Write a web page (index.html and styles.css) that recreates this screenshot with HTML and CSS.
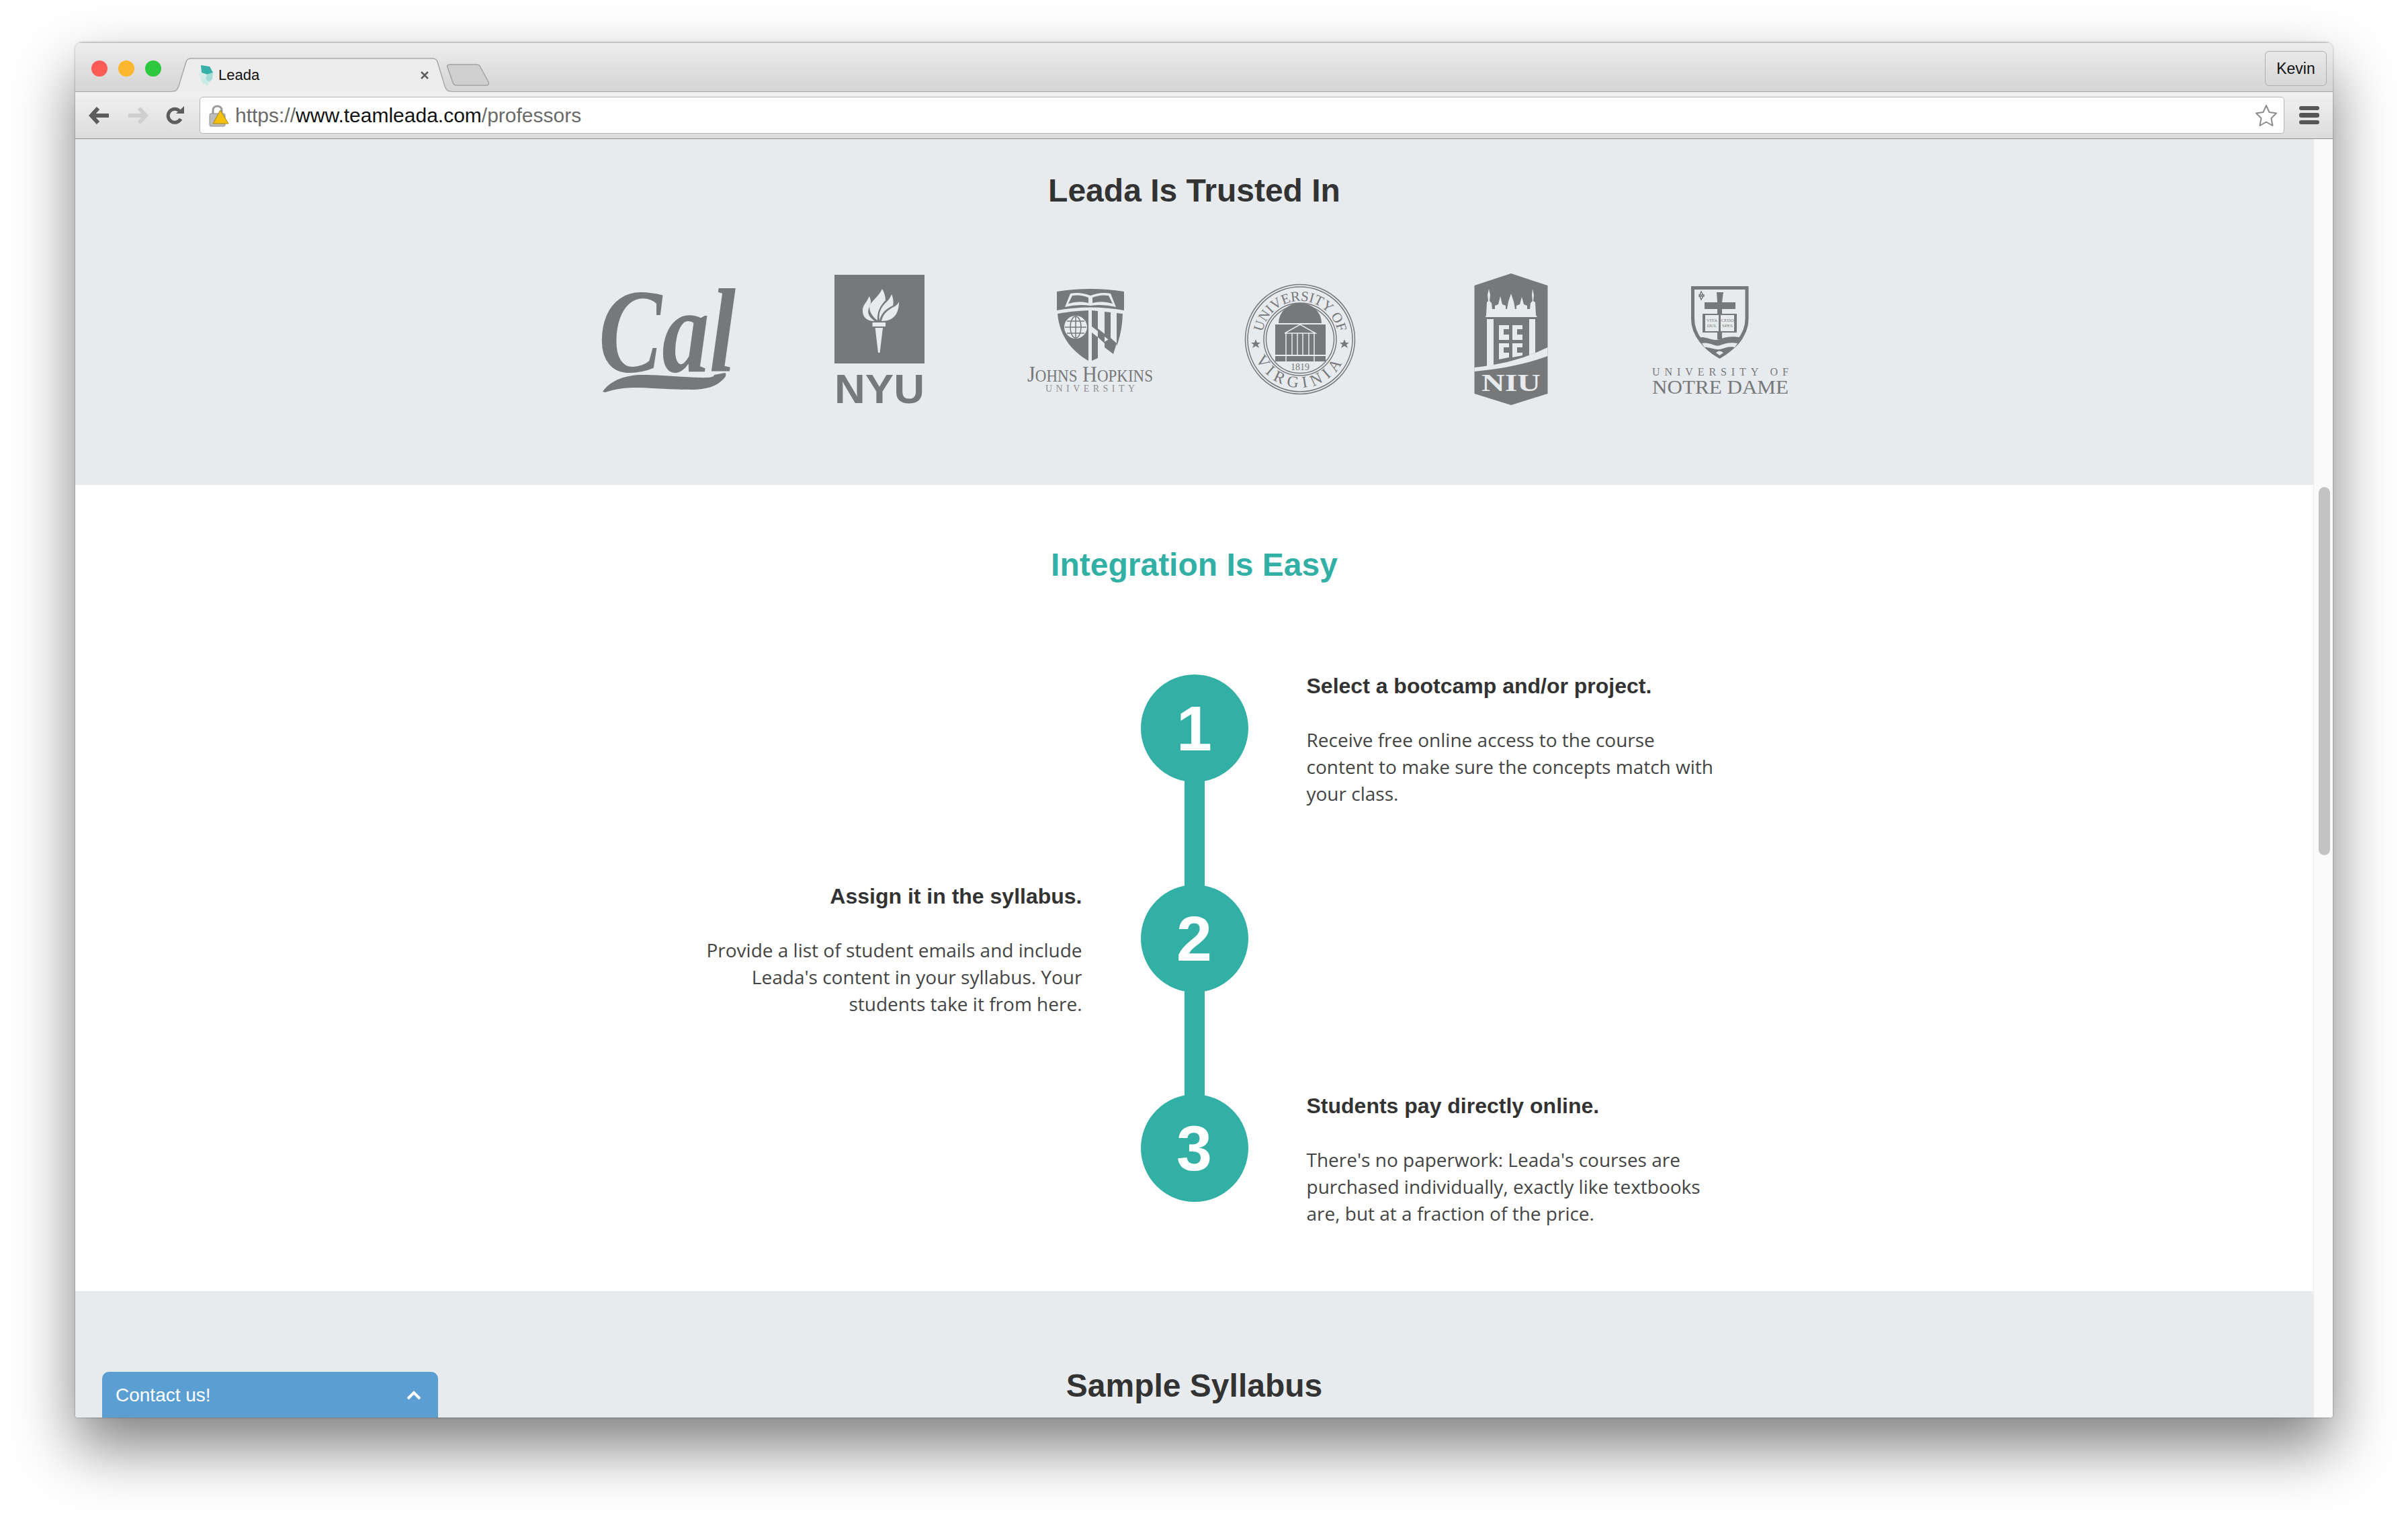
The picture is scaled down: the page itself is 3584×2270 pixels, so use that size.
FILE: index.html
```html
<!DOCTYPE html>
<html lang="en">
<head>
  <meta charset="UTF-8" />
  <title>Leada</title>
  <link rel="stylesheet" href="styles.css">
</head>
<body>

<div class="window">
  <div class="tabstrip">
    <div class="lights">
      <span class="light red"></span>
      <span class="light yellow"></span>
      <span class="light green"></span>
    </div>
    <div class="tab">
      <svg class="tab-shape" viewBox="0 0 416 51" width="416" height="51">
        <path d="M0 50C6 50 8 48 10 42L21 6C22 2 25 1 29 1H387C391 1 394 2 395 6L406 42C408 48 410 50 416 50V51H0Z" fill="#ededed"/>
        <path d="M0 50C6 50 8 48 10 42L21 6C22 2 25 1 29 1H387C391 1 394 2 395 6L406 42C408 48 410 50 416 50" fill="none" stroke="#a8a8a8" stroke-width="1.5"/>
      </svg>
      <svg class="favicon" viewBox="0 0 24 32" width="24" height="32">
        <path d="M5 1L18 3L23 12L14 15L6 12Z" fill="#36b0a8"/>
        <path d="M1 12L6 12L14 15L12 22L4 20Z" fill="#d5ece9"/>
        <path d="M14 15L23 12L22 22L17 26L12 22Z" fill="#a5dcd6"/>
        <path d="M4 20L12 22L17 26L15 32L7 27Z" fill="#c9e9e5"/>
      </svg>
      <span class="tab-title">Leada</span>
      <svg class="tab-close" viewBox="0 0 14 14" width="14" height="14">
        <path d="M2 2L12 12M12 2L2 12" stroke="#5f5f5f" stroke-width="2.6"/>
      </svg>
    </div>
    <svg class="newtab" viewBox="0 0 64 33" width="64" height="33">
      <path d="M1 5C0 2 2 1 5 1H44C47 1 49 2 50 5L62 27C63 30 62 32 59 32H15C12 32 10 31 9 28Z" fill="#cfcfcf" stroke="#a3a3a3" stroke-width="1.5"/>
    </svg>
    <div class="profile">Kevin</div>
  </div>

  <div class="toolbar">
    <svg class="nav-icon" viewBox="0 0 32 28" width="32" height="28">
      <path d="M14 3L4 14L14 25M5 14H30" fill="none" stroke="#5c5c5c" stroke-width="6"/>
    </svg>
    <svg class="nav-icon" viewBox="0 0 32 28" width="32" height="28">
      <path d="M18 3L28 14L18 25M27 14H2" fill="none" stroke="#cfcfcf" stroke-width="6"/>
    </svg>
    <svg class="nav-icon" viewBox="0 0 30 30" width="30" height="30">
      <path d="M23 20A10 10 0 1 1 21 8" fill="none" stroke="#5c5c5c" stroke-width="5"/>
      <path d="M16 12H28V1Z" fill="#5c5c5c"/>
    </svg>
    <div class="omnibox">
      <svg class="lock" viewBox="0 0 30 34" width="30" height="34">
        <path d="M6 15V9C6 1 19 1 19 9V15" fill="none" stroke="#9a9a9a" stroke-width="3"/>
        <rect x="1" y="14" width="23" height="19" rx="2" fill="#bdbdbd" stroke="#8f8f8f"/>
        <path d="M17 9L29 29H6Z" fill="#f4c20d" stroke="#a8860a"/>
      </svg>
      <div class="url">https://<b>www.teamleada.com</b>/professors</div>
      <svg class="star" viewBox="0 0 36 36" width="36" height="36">
        <path d="M18 3L22.5 13L33 14.5L25.5 22L27.5 33L18 27.5L8.500 33L10.500 22L3 14.5L13.500 13Z" fill="#fff" stroke="#8c8c8c" stroke-width="2" stroke-linejoin="round"/>
      </svg>
    </div>
    <div class="menu-icon"><span></span><span></span><span></span></div>
  </div>

  <div class="viewport">
    <div class="page">
      <section class="trusted">
        <h2 class="section-title">Leada Is Trusted In</h2>
        <div class="logos">

          <svg class="logo" viewBox="0 -30 313 260">
            <text class="cal-word" x="52" y="148" textLength="204" lengthAdjust="spacingAndGlyphs">Cal</text>
            <path d="M58 178C70 160 95 153 116 153C150 153 195 158 212 157C220 157 224 155 224 153L240 150C243 152 241 156 238 159C228 170 212 175 190 175C160 175 125 172 105 172C85 172 70 176 62 179Z"/>
          </svg>

          <svg class="logo" viewBox="0 -30 313 260">
            <rect x="90" y="4" width="134" height="132"/>
            <g class="cut">
              <path d="M161 25C165 32 166 38 166 42C158 50 153 60 154 72C146 66 141 58 142.500 50C146 42 156 36 161 25Z"/>
              <path d="M141.600 36C145 42 145 47 141 54C138 62 143 68 150 73C138 73 131 67 132 55C133 48 139 44 141.600 36Z"/>
              <path d="M175 33C178 40 178 46 177 50C168 54 160 60 157 72C155 60 160 51 168 44C171 41 173 38 175 33Z"/>
              <path d="M186 44C186 60 180 73 160 73C162 62 170 56 178 52C182 50 184 48 186 44Z"/>
              <rect x="146.500" y="75" width="19.500" height="6"/>
              <path d="M150.600 83H162L157.500 120H155Z"/>
            </g>
            <text class="nyu-word" x="90" y="195" textLength="134" lengthAdjust="spacingAndGlyphs">NYU</text>
          </svg>

          <svg class="logo" viewBox="0 -30 313 260">
            <path d="M108 29Q158 21 208 29V57Q158 48 108 57Z"/>
            <path class="cut" d="M120 52L128 32Q142 29 158 35Q174 29 188 32L196 52Q176 47 158 50Q140 47 120 52Z"/>
            <path d="M125 47L131 35Q144 33 155 38L155 46Q140 42 125 47ZM191 47L185 35Q172 33 161 38L161 46Q176 42 191 47Z"/>
            <path d="M109 62Q130 58 155 57V132C130 118 112 95 109 62Z"/>
            <circle class="cut" cx="136" cy="82" r="17"/>
            <g class="globe">
              <ellipse cx="136" cy="82" rx="8" ry="16"/>
              <path d="M120 82H152M136 66V98M123 73H149M123 91H149"/>
            </g>
            <path d="M160 57L169 58V88L160 81Z"/>
            <path d="M179 59L188 60V103L179 96Z"/>
            <path d="M197 61L206 62Q205 90 197 110Z"/>
            <path d="M160 90L169 97V128L160 132Z"/>
            <path d="M169 84L179 92V106L169 97Z"/>
            <path d="M188 98L197 106L192 122L179 112V104Z"/>
            <text class="jhu-word" x="64" y="163" textLength="187" lengthAdjust="spacingAndGlyphs">J<tspan class="jhu-small">OHNS</tspan> H<tspan class="jhu-small">OPKINS</tspan></text>
            <text class="jhu-sub" x="91" y="178" textLength="133">UNIVERSITY</text>
          </svg>

          <svg class="logo" viewBox="0 -30 313 260">
            <defs>
              <path id="arc-top" d="M100.900 110A57 57 0 1 1 213.100 110"/>
              <path id="arc-bottom" d="M85 100A72 72 0 0 0 229 100"/>
            </defs>
            <g class="rings">
              <circle cx="157" cy="100" r="81.500"/>
              <circle cx="157" cy="100" r="78"/>
              <circle cx="157" cy="100" r="54"/>
              <circle cx="157" cy="100" r="50.500"/>
            </g>
            <text class="uva-word"><textPath href="#arc-top" startOffset="50%" text-anchor="middle">UNIVERSITY OF</textPath></text>
            <text class="uva-word wide"><textPath href="#arc-bottom" startOffset="50%" text-anchor="middle">VIRGINIA</textPath></text>
            <path d="M125 76A32 30 0 0 1 189 76Z"/>
            <rect x="120" y="78" width="75" height="45"/>
            <rect x="120" y="125" width="75" height="8"/>
            <g class="uva-lines">
              <path d="M134 91L157 78L180 91H134M136 91V123M145 91V123M153 91V123M161 91V123M170 91V123M178 91V123M136 125V133M178 125V133"/>
            </g>
            <text class="uva-year" x="157" y="146" text-anchor="middle">1819</text>
            <path d="M91 100L93 105H98L94 108L96 113L91 110L86 113L88 108L84 105H89Z"/>
            <path d="M223 100L225 105H230L226 108L228 113L223 110L218 113L220 108L216 105H221Z"/>
          </svg>

          <svg class="logo" viewBox="0 -30 313 260">
            <path d="M158 2L212.500 20V181L158 198L103.500 181V20Z"/>
            <g class="cut">
              <path d="M121 64L122 45L124 43L123 34L125 25L127 34L126 43L129 46L130 55H134V50L139 48L142 36L145 48L150 50V55H152L154 44L158 32L162 44L164 55H166V50L171 48L174 37L177 48L182 50V55H186L187 46L190 43L189 34L190 25L192 34L191 43L194 45L195 64L197 67H120Z"/>
              <path d="M122 70H132V140H122Z"/>
              <path d="M185 70H194V120L185 124Z"/>
              <path d="M140 79H155V85H147V93H155V101H140Z"/>
              <path d="M160 79H175V85H167V93H175V101H160Z"/>
              <path d="M140 106H155V112H147V120H155V127L140 130Z"/>
              <path d="M160 106H175V112H167V120H175V124L160 127Z"/>
              <path d="M103.500 142C145 138 180 128 212.500 112V125C180 137 145 144 103.500 148Z"/>
            </g>
            <text class="niu-word" x="114" y="177" textLength="88" lengthAdjust="spacingAndGlyphs">NIU</text>
          </svg>

          <svg class="logo" viewBox="0 -30 313 260">
            <path class="nd-shield" d="M115.500 23.500H196V70C196 95 175 115 155.500 126C136 115 115.500 95 115.500 70Z"/>
            <path d="M122 98C135 94 145 104 155 100C165 96 176 95 190 98C182 112 168 120 155.500 127C143 120 130 112 122 98Z"/>
            <path class="cut" d="M129 106C140 103 148 112 156 109C164 106 172 104 182 106L178 112C170 110 164 113 156 115C148 116 140 111 133 112Z"/>
            <path class="cut" d="M150 120Q155 115 161 120L155.500 124Z"/>
            <path class="nd-star" d="M128 29L132 36H125ZM128 41L125 34H132Z"/>
            <path d="M151 30H161L159 45H179V55H159V62H152V55H133V45H152Z"/>
            <path d="M130 62H181V90H130Z"/>
            <rect class="cut" x="134" y="64" width="20" height="24"/>
            <rect class="cut" x="157" y="64" width="20" height="24"/>
            <rect x="152" y="90" width="7" height="10"/>
            <text class="nd-tiny" x="144" y="74" text-anchor="middle">VITA</text>
            <text class="nd-tiny" x="144" y="82" text-anchor="middle">DUL</text>
            <text class="nd-tiny" x="167" y="74" text-anchor="middle">CEDO</text>
            <text class="nd-tiny" x="167" y="82" text-anchor="middle">SPES</text>
            <text class="nd-top" x="55" y="154" textLength="203">UNIVERSITY OF</text>
            <text class="nd-name" x="55" y="181" textLength="203" lengthAdjust="spacingAndGlyphs">NOTRE DAME</text>
          </svg>

        </div>
      </section>

      <section class="integration">
        <h2 class="section-title teal">Integration Is Easy</h2>
        <div class="steps">
          <div class="step">
            <div></div>
            <div class="step-mid"><div class="circle">1</div><div class="connector"></div></div>
            <div class="step-text">
              <h4>Select a bootcamp and/or project.</h4>
              <p>Receive free online access to the course content to make sure the concepts match with your class.</p>
            </div>
          </div>
          <div class="step">
            <div class="step-text left">
              <h4>Assign it in the syllabus.</h4>
              <p>Provide a list of student emails and include Leada's content in your syllabus. Your students take it from here.</p>
            </div>
            <div class="step-mid"><div class="circle">2</div><div class="connector"></div></div>
            <div></div>
          </div>
          <div class="step">
            <div></div>
            <div class="step-mid"><div class="circle">3</div></div>
            <div class="step-text">
              <h4>Students pay directly online.</h4>
              <p>There's no paperwork: Leada's courses are purchased individually, exactly like textbooks are, but at a fraction of the price.</p>
            </div>
          </div>
        </div>
      </section>

      <section class="syllabus">
        <h2 class="section-title">Sample Syllabus</h2>
      </section>

      <div class="contact">
        <span>Contact us!</span>
        <svg viewBox="0 0 22 14" width="22" height="14">
          <path d="M2 12L11 3L20 12" fill="none" stroke="#fff" stroke-width="4"/>
        </svg>
      </div>
    </div>
    <div class="scrollbar"><div class="thumb"></div></div>
  </div>
</div>

</body>
</html>
```

FILE: styles.css
```css
* {
  box-sizing: border-box;
}
html, body {
  height: 100%;
}
body {
  margin: 0;
  padding: 63px 112px 160px;
  background: #fff;
  overflow: hidden;
  font-family: "Liberation Sans", Arial, sans-serif;
  color: #333;
}

/* browser chrome */
.window {
  display: flex;
  flex-direction: column;
  height: 2047px;
  border-radius: 10px 10px 4px 4px;
  overflow: hidden;
  background: #fff;
  box-shadow: 0 44px 90px rgba(0,0,0,0.5), 0 0 3px rgba(0,0,0,0.35);
}
.tabstrip {
  display: flex;
  align-items: flex-end;
  height: 74px;
  flex-shrink: 0;
  background: linear-gradient(#ededed, #d4d4d4);
  border-top: 1px solid #bcbcbc;
  border-bottom: 1.5px solid #a3a3a3;
}
.lights {
  display: flex;
  gap: 16px;
  margin: 0 16px 22px 24px;
}
.light {
  width: 24px;
  height: 24px;
  border-radius: 50%;
}
.red { background: #fc5b57; }
.yellow { background: #fdb72e; }
.green { background: #2ec840; }
.tab {
  position: relative;
  display: flex;
  align-items: center;
  width: 416px;
  height: 51px;
  margin-bottom: -1px;
  padding: 1px 33px 0 38px;
  flex-shrink: 0;
}
.tab-shape {
  position: absolute;
  left: 0;
  top: 0;
}
.favicon, .tab-title, .tab-close {
  position: relative;
}
.tab-title {
  margin-left: 7px;
  font-size: 22px;
  color: #111;
  flex: 1;
}
.newtab {
  margin: 0 0 8px -7px;
  flex-shrink: 0;
}
.profile {
  margin: 0 9px 8px auto;
  width: 92px;
  height: 52px;
  line-height: 50px;
  text-align: center;
  font-size: 23px;
  color: #111;
  border: 1px solid #b0b0b0;
  border-radius: 6px;
}
.toolbar {
  display: flex;
  align-items: center;
  height: 70px;
  flex-shrink: 0;
  padding: 0 20px 0 20px;
  background: linear-gradient(#f1f1f1, #dcdcdc);
  border-bottom: 1.5px solid #8f8f8f;
}
.nav-icon {
  margin-right: 25px;
  flex-shrink: 0;
}
.nav-icon:nth-child(3) {
  margin-right: 21px;
}
.omnibox {
  display: flex;
  align-items: center;
  flex: 1;
  height: 55px;
  margin-right: 22px;
  padding: 0 8px 0 13px;
  background: #fff;
  border: 1px solid #b4b4b4;
  border-radius: 5px;
}
.lock {
  flex-shrink: 0;
}
.url {
  flex: 1;
  margin-left: 9px;
  font-size: 30px;
  color: #6a6a6a;
}
.url b {
  font-weight: normal;
  color: #111;
}
.menu-icon {
  display: flex;
  flex-direction: column;
  gap: 4px;
  width: 30px;
}
.menu-icon span {
  height: 6.500px;
  background: #555;
  border-radius: 3px;
}

/* page */
.viewport {
  display: flex;
  flex: 1;
  min-height: 0;
}
.page {
  position: relative;
  flex: 1;
  display: flex;
  flex-direction: column;
  overflow: hidden;
}
.scrollbar {
  width: 29px;
  padding: 518px 4px 0 7px;
  background: #fafafa;
  border-left: 1px solid #ececec;
}
.thumb {
  height: 548px;
  background: #c3c3c3;
  border-radius: 9px;
}
.section-title {
  margin: 0;
  text-align: center;
  font-size: 48px;
  line-height: 58px;
  font-weight: bold;
  color: #333;
}
.teal {
  color: #33b0a6;
}
.trusted {
  height: 515px;
  padding-top: 48px;
  background: #e8ebee;
}
.logos {
  display: flex;
  justify-content: center;
  margin-top: 62px;
}
.logo {
  width: 313px;
  height: 260px;
  fill: #77787a;
}
.logo .cut {
  fill: #e8ebee;
}
.cal-word {
  font-family: "Liberation Serif", serif;
  font-weight: bold;
  font-style: italic;
  font-size: 178px;
}
.nyu-word {
  font-family: "Liberation Sans", sans-serif;
  font-weight: bold;
  font-size: 61px;
}
.globe {
  fill: none;
  stroke: #77787a;
  stroke-width: 1.5;
}
.globe path {
  fill: none;
}
.jhu-word {
  font-family: "Liberation Serif", serif;
  font-size: 33px;
}
.jhu-small {
  font-size: 25px;
}
.jhu-sub {
  font-family: "Liberation Serif", serif;
  font-size: 14px;
  fill: #8c8d8f;
}
.rings circle {
  fill: none;
  stroke: #77787a;
  stroke-width: 1.5;
}
.uva-word {
  font-family: "Liberation Serif", serif;
  font-size: 21px;
}
.uva-word.wide {
  font-size: 24px;
  letter-spacing: 7px;
}
.uva-lines path {
  fill: none;
  stroke: #e8ebee;
  stroke-width: 1.5;
}
.uva-year {
  font-family: "Liberation Serif", serif;
  font-size: 14px;
}
.niu-word {
  font-family: "Liberation Serif", serif;
  font-weight: bold;
  font-size: 36px;
  fill: #e8ebee;
}
.nd-shield {
  fill: none;
  stroke: #77787a;
  stroke-width: 5;
}
.logo .nd-star {
  fill: none;
  stroke: #77787a;
  stroke-width: 1.5;
}
.nd-tiny {
  font-family: "Liberation Serif", serif;
  font-size: 7px;
}
.nd-top {
  font-family: "Liberation Serif", serif;
  font-size: 16px;
}
.nd-name {
  font-family: "Liberation Serif", serif;
  font-size: 30px;
}

.integration {
  height: 1200px;
  padding-top: 90px;
  background: #fff;
}
.steps {
  margin-top: 134px;
}
.step {
  display: grid;
  grid-template-columns: 640px 334px 640px;
  justify-content: center;
  height: 312.500px;
}
.step-mid {
  display: flex;
  flex-direction: column;
  align-items: center;
}
.circle {
  width: 160px;
  height: 160px;
  flex-shrink: 0;
  border-radius: 50%;
  background: #33b0a6;
  color: #fff;
  font-size: 95px;
  font-weight: bold;
  line-height: 160px;
  text-align: center;
}
.connector {
  flex: 1;
  width: 30px;
  margin: -2px 0;
  background: #33b0a6;
}
.step-text {
  width: 610px;
}
.step-text.left {
  justify-self: end;
  text-align: right;
}
.step-text h4 {
  margin: 0 0 43px;
  font-size: 32px;
  line-height: 34px;
  font-weight: bold;
  color: #333;
}
.step-text p {
  margin: 0;
  font-family: "Open Sans", sans-serif;
  font-size: 28px;
  line-height: 40px;
  color: #444;
}
.syllabus {
  flex: 1;
  padding-top: 112px;
  background: #e8ebee;
}
.contact {
  position: absolute;
  left: 40px;
  bottom: 0;
  display: flex;
  align-items: center;
  justify-content: space-between;
  width: 500px;
  height: 68px;
  padding: 1px 25px 0 20px;
  background: #5b9fd2;
  border-radius: 10px 10px 0 0;
  color: #fff;
  font-size: 28px;
}
```
